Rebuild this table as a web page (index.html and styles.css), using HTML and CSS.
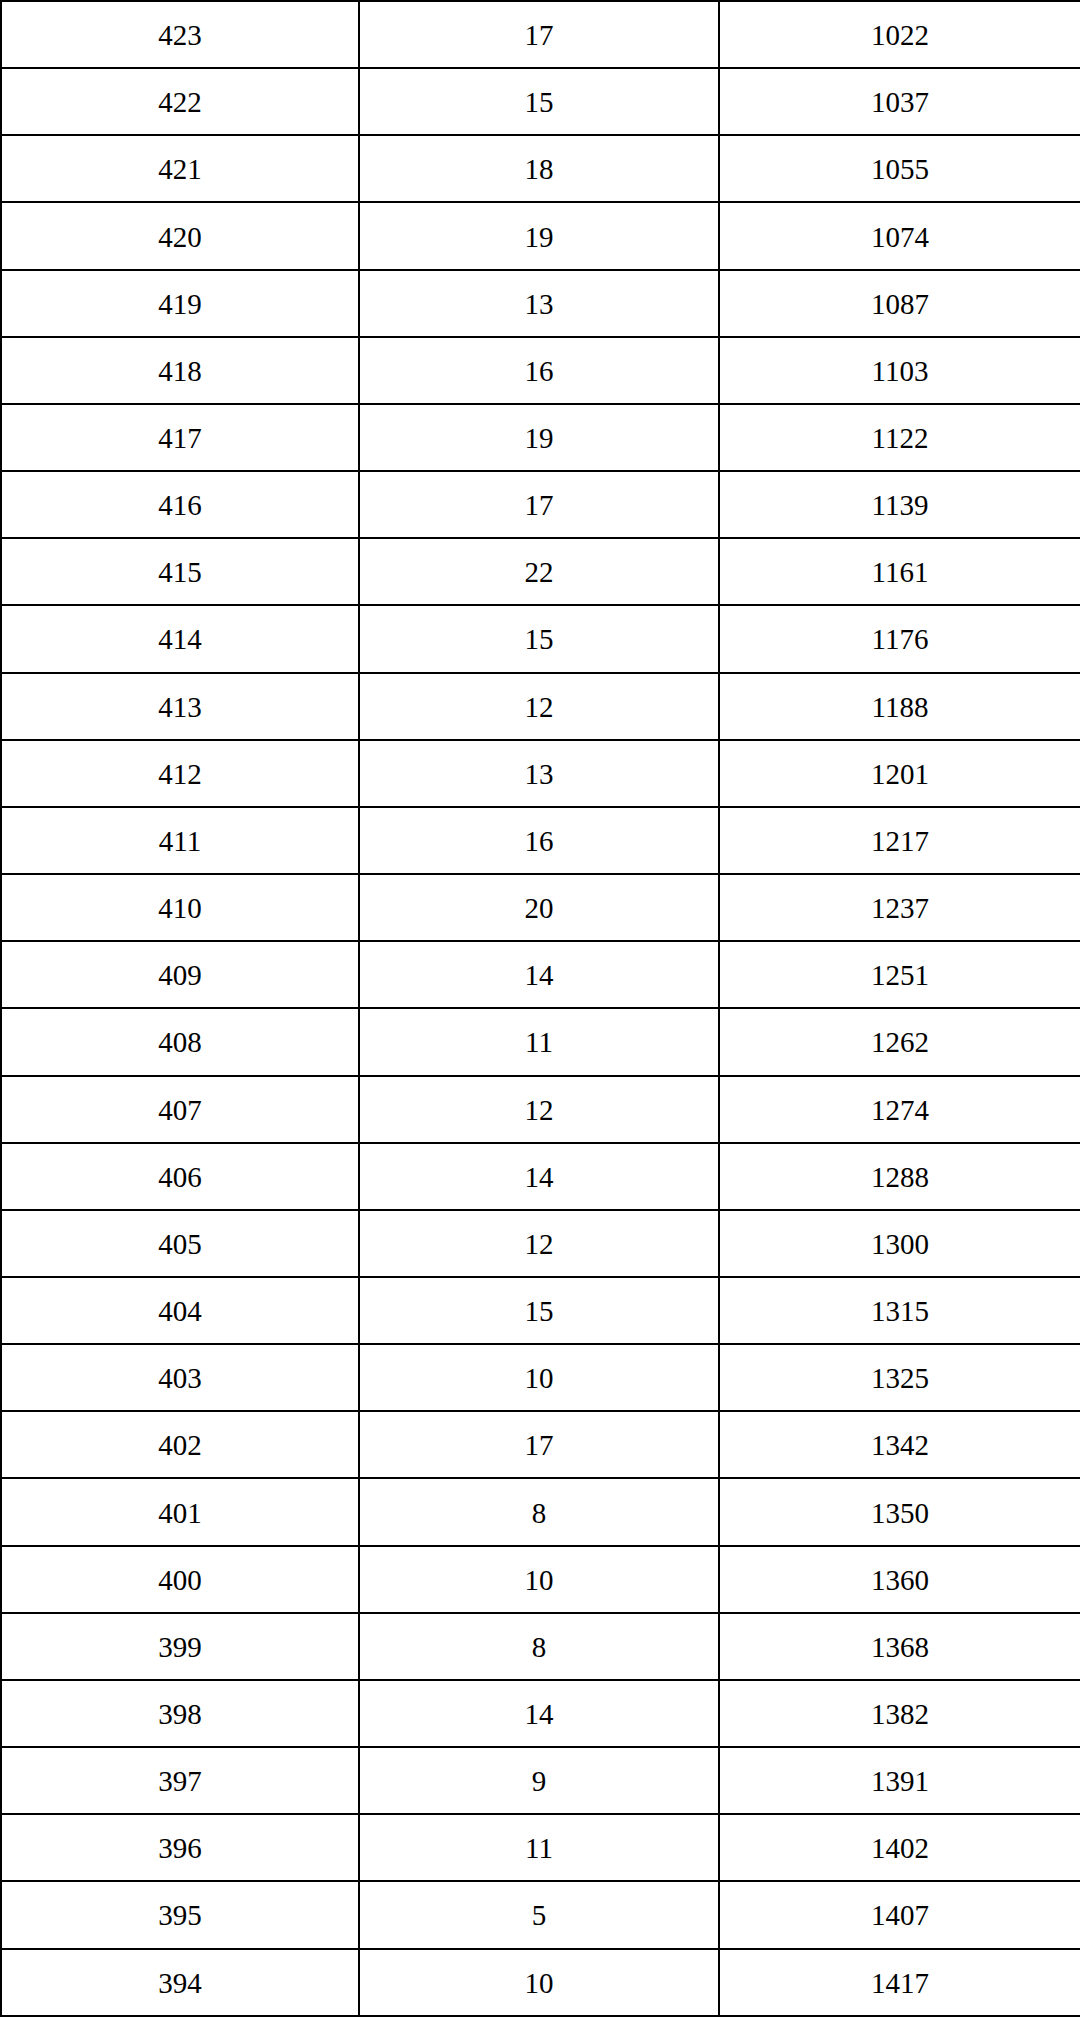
FILE: index.html
```html
<!DOCTYPE html>
<html>
<head>
<meta charset="utf-8">
<link rel="stylesheet" href="styles.css">
</head>
<body>
<table class="scores">
<colgroup><col class="c1"><col class="c2"><col class="c3"></colgroup>
<tbody>
<tr><td>423</td><td>17</td><td>1022</td></tr>
<tr><td>422</td><td>15</td><td>1037</td></tr>
<tr><td>421</td><td>18</td><td>1055</td></tr>
<tr><td>420</td><td>19</td><td>1074</td></tr>
<tr><td>419</td><td>13</td><td>1087</td></tr>
<tr><td>418</td><td>16</td><td>1103</td></tr>
<tr><td>417</td><td>19</td><td>1122</td></tr>
<tr><td>416</td><td>17</td><td>1139</td></tr>
<tr><td>415</td><td>22</td><td>1161</td></tr>
<tr><td>414</td><td>15</td><td>1176</td></tr>
<tr><td>413</td><td>12</td><td>1188</td></tr>
<tr><td>412</td><td>13</td><td>1201</td></tr>
<tr><td>411</td><td>16</td><td>1217</td></tr>
<tr><td>410</td><td>20</td><td>1237</td></tr>
<tr><td>409</td><td>14</td><td>1251</td></tr>
<tr><td>408</td><td>11</td><td>1262</td></tr>
<tr><td>407</td><td>12</td><td>1274</td></tr>
<tr><td>406</td><td>14</td><td>1288</td></tr>
<tr><td>405</td><td>12</td><td>1300</td></tr>
<tr><td>404</td><td>15</td><td>1315</td></tr>
<tr><td>403</td><td>10</td><td>1325</td></tr>
<tr><td>402</td><td>17</td><td>1342</td></tr>
<tr><td>401</td><td>8</td><td>1350</td></tr>
<tr><td>400</td><td>10</td><td>1360</td></tr>
<tr><td>399</td><td>8</td><td>1368</td></tr>
<tr><td>398</td><td>14</td><td>1382</td></tr>
<tr><td>397</td><td>9</td><td>1391</td></tr>
<tr><td>396</td><td>11</td><td>1402</td></tr>
<tr><td>395</td><td>5</td><td>1407</td></tr>
<tr><td>394</td><td>10</td><td>1417</td></tr>
</tbody>
</table>
</body>
</html>
```

FILE: styles.css
```css
html, body {
  margin: 0;
  padding: 0;
  background: #ffffff;
}

.scores {
  width: 1080px;
  height: 2017px;
  border-collapse: collapse;
  table-layout: fixed;
  font-family: "Liberation Serif", "Times New Roman", serif;
  font-size: 29px;
  color: #000000;
}

.scores .c1 { width: 358px; }
.scores .c2 { width: 360px; }
.scores .c3 { width: 362px; }

.scores td {
  border: 2px solid #000000;
  text-align: center;
  vertical-align: middle;
  padding: 2px 0 0 0;
  line-height: 1;
}
```
